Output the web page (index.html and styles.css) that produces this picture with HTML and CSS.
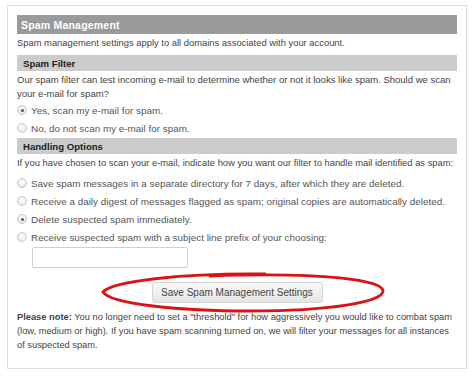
FILE: index.html
```html
<!DOCTYPE html>
<html lang="en">
<head>
    <meta charset="UTF-8">
    <title>Spam Management</title>
    <link rel="stylesheet" href="styles.css">
</head>
<body>
    <div class="panel">
        <h2 class="section-head">Spam Management</h2>
        <p class="intro">Spam management settings apply to all domains associated with your account.</p>

        <h3 class="sub-head">Spam Filter</h3>
        <p class="desc">Our spam filter can test incoming e-mail to determine whether or not it looks like spam. Should we scan your e-mail for spam?</p>
        <div class="options first">
            <label class="option"><input type="radio" name="scan" checked> Yes, scan my e-mail for spam.</label>
            <label class="option"><input type="radio" name="scan"> No, do not scan my e-mail for spam.</label>
        </div>

        <h3 class="sub-head">Handling Options</h3>
        <p class="desc small">If you have chosen to scan your e-mail, indicate how you want our filter to handle mail identified as spam:</p>
        <div class="options second">
            <label class="option"><input type="radio" name="handle"> Save spam messages in a separate directory for 7 days, after which they are deleted.</label>
            <label class="option"><input type="radio" name="handle"> Receive a daily digest of messages flagged as spam; original copies are automatically deleted.</label>
            <label class="option"><input type="radio" name="handle" checked> Delete suspected spam immediately.</label>
            <label class="option"><input type="radio" name="handle"> Receive suspected spam with a subject line prefix of your choosing:</label>
            <input type="text" class="prefix">
        </div>

        <div class="actions">
            <button class="save-btn">Save Spam Management Settings</button>
            <svg class="circle-mark" width="286" height="44" viewBox="0 0 286 44">
                <path d="M165 4 C 85 3, 12 11, 3 22 C 10 34, 80 41, 150 41 C 230 41, 283 32, 283 21 C 283 10, 225 2, 110 6"
                      fill="none" stroke="#dd1111" stroke-width="2.8" stroke-linecap="round"/>
            </svg>
        </div>

        <p class="note"><b>Please note:</b> You no longer need to set a "threshold" for how aggressively you would like to combat spam (low, medium or high). If you have spam scanning turned on, we will filter your messages for all instances of suspected spam.</p>
    </div>
</body>
</html>
```

FILE: styles.css
```css
body {
    margin: 5px 0 0 7px;
    background-color: #ffffff;
    font-family: "Liberation Sans", Arial, sans-serif;
    color: #444444;
}

.panel {
    width: 440px;
    height: 353px;
    padding: 9px 9px 0 9px;
    border: 1px solid #dcdcdc;
}

.section-head {
    margin: 0;
    height: 19px;
    padding-left: 4px;
    background-color: #9a9a9a;
    color: #ffffff;
    font-size: 10.5px;
    line-height: 20px;
    font-weight: bold;
    letter-spacing: 0.2px;
}

.intro {
    margin: 2px 0 5px;
    font-size: 9.4px;
    line-height: 14px;
}

.sub-head {
    margin: 0;
    height: 16px;
    padding-left: 6px;
    background-color: #cccccc;
    color: #222222;
    font-size: 9.6px;
    line-height: 17px;
    font-weight: bold;
}

.desc {
    margin: 2px 0 0;
    font-size: 9.5px;
    line-height: 14px;
}

.desc.small {
    font-size: 9.4px;
}

.options {
    display: flex;
    flex-direction: column;
}

.options.first {
    margin-bottom: 1px;
}

.options.second {
    margin-top: 4px;
}

.option {
    display: flex;
    align-items: center;
    gap: 4px;
    height: 18px;
    font-size: 9.9px;
    color: #555555;
}

.option input {
    appearance: none;
    margin: 0;
    width: 10px;
    height: 10px;
    border: 1px solid #c8c8c8;
    border-radius: 50%;
    background: radial-gradient(circle at 50% 40%, #ffffff, #e0e0e0);
    position: relative;
}

.option input:checked::after {
    content: "";
    position: absolute;
    left: 2.5px;
    top: 2.5px;
    width: 3px;
    height: 3px;
    border-radius: 50%;
    background-color: #555555;
}

.prefix {
    width: 156px;
    height: 21px;
    margin: 1px 0 0 15px;
    padding: 0;
    box-sizing: border-box;
    border: 1px solid #cfcfcf;
    border-radius: 2px;
}

.actions {
    position: relative;
    display: flex;
    justify-content: center;
    margin-top: 14px;
}

.save-btn {
    width: 171px;
    height: 21px;
    padding: 0;
    border: 1px solid #d6d6d6;
    border-radius: 3px;
    background: linear-gradient(#fafafa, #e4e4e4);
    font-family: "Liberation Sans", Arial, sans-serif;
    font-size: 10px;
    color: #444444;
}

.circle-mark {
    position: absolute;
    left: 83px;
    top: -12px;
}

.note {
    margin: 7px 0 0;
    font-size: 9.3px;
    line-height: 14px;
}
```
